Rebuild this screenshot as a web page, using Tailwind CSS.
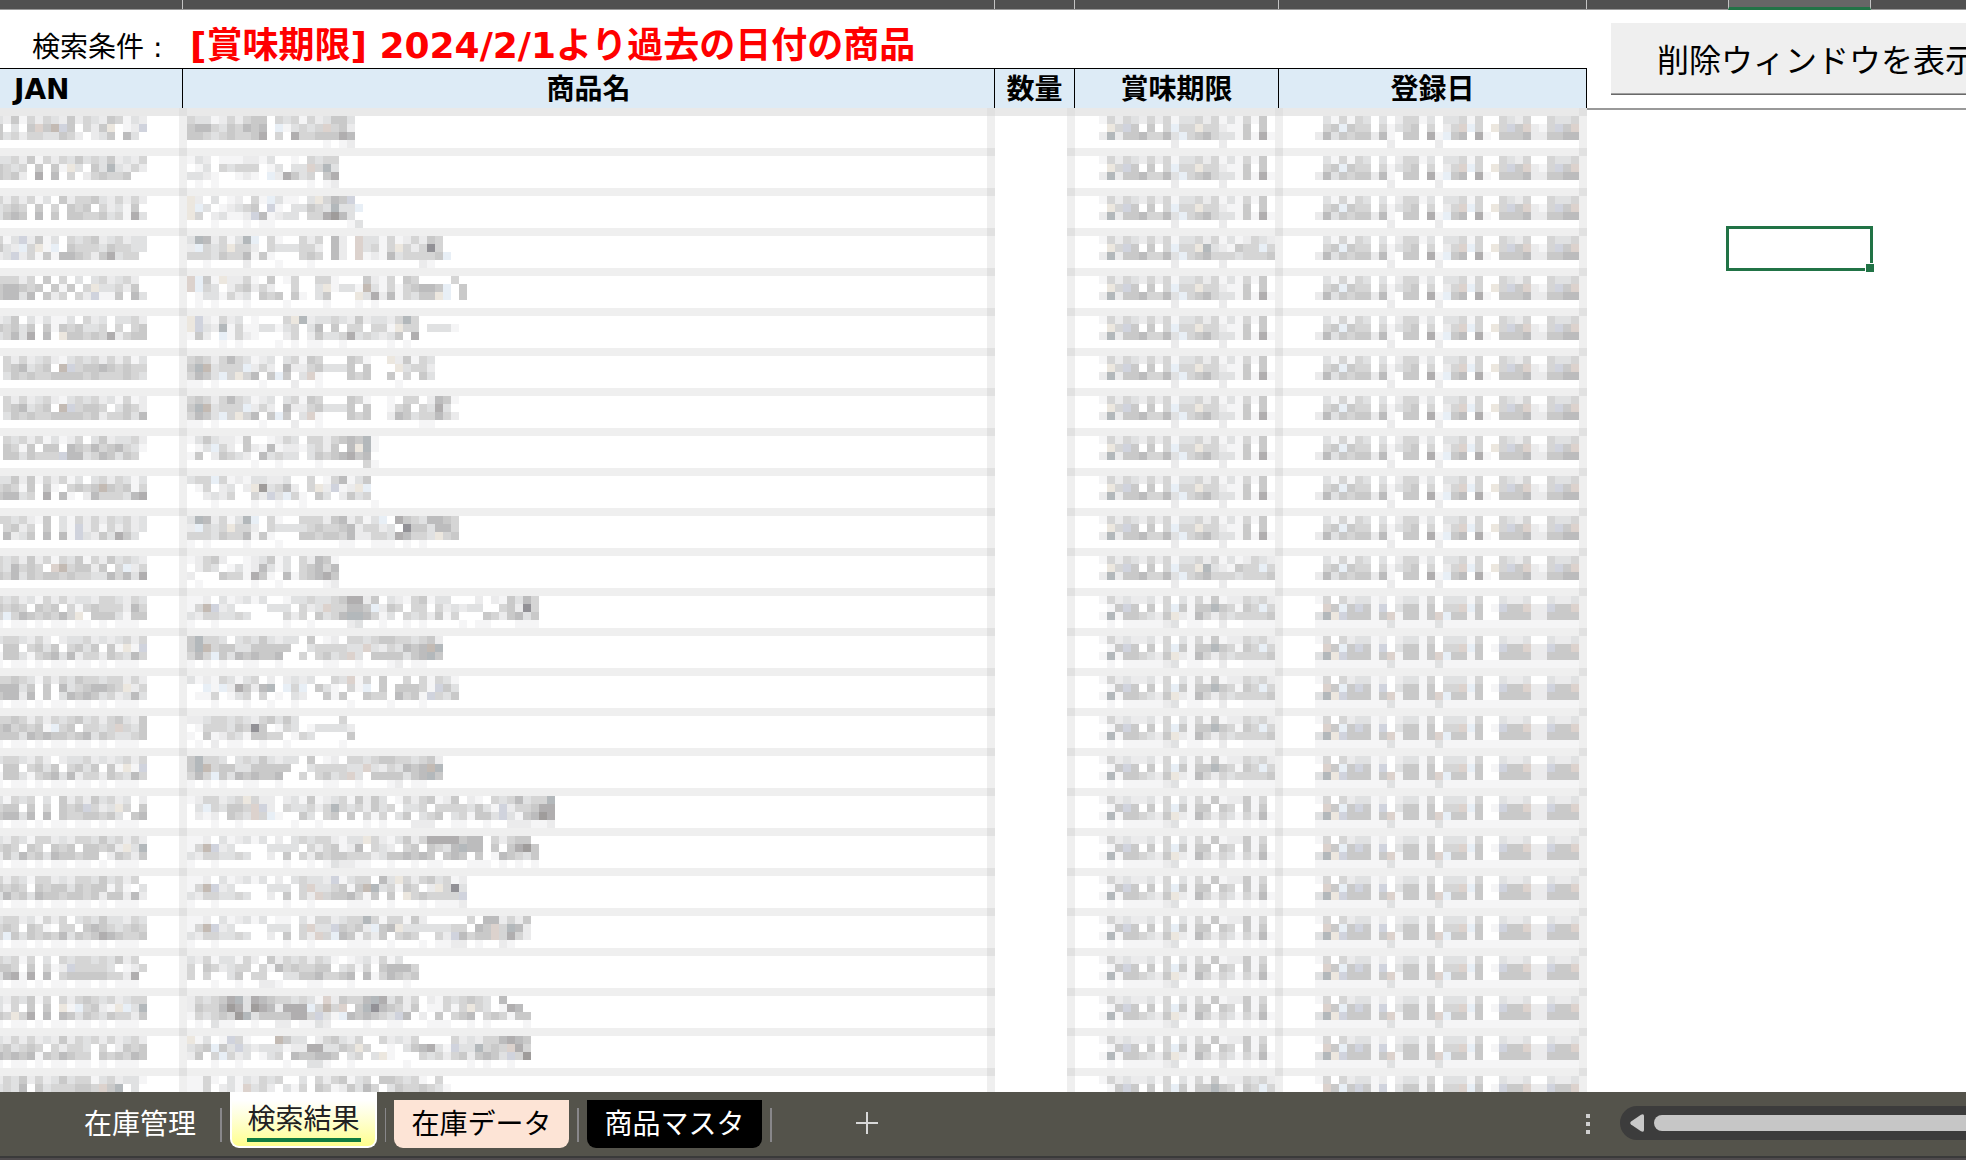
<!DOCTYPE html>
<html lang="ja">
<head>
<meta charset="utf-8">
<title>在庫管理 - 検索結果</title>
<script src="https://cdn.jsdelivr.net/npm/@tailwindcss/browser@4"></script>
</head>
<body class="flex h-screen flex-col overflow-hidden bg-white font-['DejaVu_Sans','Noto_Sans_CJK_JP',sans-serif] text-black">

<!-- column header strip -->
<div class="flex h-[10px] shrink-0 border-b border-[#999] bg-[#505050]">
  <div class="w-[183px] shrink-0 border-r border-[#c4c4c4]"></div>
  <div class="w-[812px] shrink-0 border-r border-[#c4c4c4]"></div>
  <div class="w-[80px] shrink-0 border-r border-[#c4c4c4]"></div>
  <div class="w-[204px] shrink-0 border-r border-[#c4c4c4]"></div>
  <div class="w-[308px] shrink-0 border-r border-[#c4c4c4]"></div>
  <div class="w-[141px] shrink-0"></div>
  <div class="h-[10px] w-[143px] shrink-0 border-x border-b-3 border-x-[#c4c4c4] border-b-[#217346] bg-[#666]"></div>
  <div class="flex-1"></div>
</div>

<main class="flex min-h-0 flex-1 overflow-hidden">
  <section class="w-[1587px] shrink-0">
    <div class="flex h-[58px] items-end pb-1">
      <p class="w-[190px] shrink-0 pl-8 text-[28px] leading-8 whitespace-nowrap">検索条件 :</p>
      <h1 class="text-[36px] leading-9 font-bold whitespace-nowrap text-[#ff0000]">[賞味期限] 2024/2/1より過去の日付の商品</h1>
    </div>
    <table class="w-full table-fixed border-separate border-spacing-0">
      <colgroup><col class="w-[183px]"><col class="w-[812px]"><col class="w-[80px]"><col class="w-[204px]"><col class="w-[308px]"></colgroup>
      <thead>
        <tr class="h-10 bg-[#ddebf6] text-[28px] leading-9 font-bold">
          <th class="border-t border-r border-black p-0 pt-[2px] pl-[14px] text-left">JAN</th>
          <th class="border-t border-r border-black p-0 pt-[2px]">商品名</th>
          <th class="border-t border-r border-black p-0 pt-[2px]">数量</th>
          <th class="border-t border-r border-black p-0 pt-[2px]">賞味期限</th>
          <th class="border-t border-r border-black p-0 pt-[2px]">登録日</th>
        </tr>
      </thead>
      <tbody id="rows"></tbody>
    </table>
  </section>

  <section class="relative min-w-0 flex-1 overflow-hidden">
    <div class="flex h-[100px] overflow-hidden border-b-2 border-[#999] pt-[13px] pl-6">
      <button type="button" class="h-[72px] shrink-0 border-b border-[#696969] bg-[#efefef] px-[46px] pt-1 text-[32px] whitespace-nowrap shadow-[inset_0_-1px_0_#a0a0a0]">削除ウィンドウを表示</button>
    </div>
    <!-- selected cell -->
    <div class="absolute top-[216px] left-[139px] h-[45px] w-[147px] border-3 border-[#217346]">
      <span class="absolute -right-1 -bottom-1 size-[9px] border-t border-l border-white bg-[#217346]"></span>
    </div>
  </section>
</main>

<footer class="flex h-[68px] shrink-0 flex-col bg-[#54534b]">
  <div class="flex h-16 items-start">
    <nav class="flex h-14 shrink-0 items-end text-[28px] leading-8">
      <a href="#stock" class="mr-6 ml-[84px] flex h-12 items-center pt-[2px] text-white">在庫管理</a>
      <span class="mr-2 mb-[6px] h-[34px] w-[2px] bg-[#88878a]"></span>
      <a href="#result" class="flex h-14 w-[147px] flex-col items-center justify-end rounded-b-[9px] border-2 border-t-0 border-white bg-linear-to-b from-white from-15% to-[#ffff8c] pb-1 text-[#222]">
        <span class="h-[34px]">検索結果</span>
        <span class="h-1 w-[114px] bg-[#107c41]"></span>
      </a>
      <span class="mr-2 mb-[6px] ml-2 h-[34px] w-px bg-[#88878a]"></span>
      <a href="#data" class="flex h-12 w-[175px] items-center justify-center rounded-b-[9px] bg-[#fde4d6] pt-[2px]">在庫データ</a>
      <span class="mr-2 mb-[6px] ml-2 h-[34px] w-[2px] bg-[#88878a]"></span>
      <a href="#master" class="flex h-12 w-[175px] items-center justify-center rounded-b-[9px] bg-black pt-[2px] text-white">商品マスタ</a>
      <span class="mb-[6px] ml-2 h-[34px] w-[2px] bg-[#88878a]"></span>
      <button type="button" aria-label="シートを追加" class="mb-[14px] ml-[84px]">
        <svg width="22" height="22" viewBox="0 0 22 22" stroke="#d8d8d8" stroke-width="2" shape-rendering="crispEdges"><path d="M11 0V22M0 11H22"/></svg>
      </button>
    </nav>
    <div class="flex-1"></div>
    <svg class="mt-[22px] mr-[30px] shrink-0" width="4" height="21" fill="#d0d0d0" shape-rendering="crispEdges"><path d="M0 0h4v4H0zM0 8h4v4H0zM0 16h4v4H0z"/></svg>
    <div class="mt-[14px] flex h-[34px] w-[346px] shrink-0 items-center rounded-l-[17px] bg-[#3c3c3c] pl-[10px]">
      <svg class="mr-[10px] shrink-0" width="14" height="18" viewBox="0 0 14 18"><path d="M1 7.5 11 .8Q14 -.5 14 2V16Q14 18.500 11 17.200L1 10.500Q-.5 9 1 7.500Z" fill="#c8c8c8"/></svg>
      <div class="h-4 flex-1 rounded-l-lg bg-[#c6c6c6]"></div>
    </div>
  </div>
  <div class="h-1 border-t-2 border-[#3a3a3a] bg-[#4f4b4d]"></div>
</footer>

<script>
// Shade codes for the 8px mosaic that hides each value.
const shade = {1:'#f5f5f6',2:'#ebebec',3:'#e0e1e2',4:'#d5d5d5',5:'#c9c9c9',6:'#bcbcbd',7:'#b0aeaf',8:'#9f9c9b',9:'#929196',
  b:'#d0d3dd',c:'#e8eff6',g:'#b3b8bb',p:'#dcd2cd',y:'#ece7df',t:'#c3bab3'};

// Per record: three lines for JAN, then the lines for the product name.
const data = [
 ['3251424325243254132','50305p5tb50425y012b','5342443354202350630', '433124245504341423553','56643546560c13434p452','5543454457040744555760','000000000000000001012'],
 ['3342514243534352324','543405051y3053g3242','5452070604024544500', '1320111221300104344','013043444013033p4g3','3321001210c27534057','0101000000000001012'],
 ['4242413052445324242','3454050405450423150','3565060505544534173', 'y203012041c31103y465b','yc30123450b1033543g33c','y4023112b612330447863','0001000101100000000013'],
 ['413b251304345234233','532c4y1c05444354433','23b24151665425734405', '3g62413gc04100424062'+'0p3314124254','2c434y442043334420620p3414y42494','444354461510004540620p1216344445c','0010000200010001000000000000021'],
 ['444240504030342342','566545051504y334250','566360524042b115063', 'pc51y22410501400441000521405400004','pc430245242004003y1331t314145665c05','01331423054505103500'+'0y372614355yc05','010100010000100001000101'],
 ['2350313113042303342','5453505154533404045','34637060y5545472455', 'yb21423010004yg233432523324g4','yb32g141133134036050440441y4403331','1520c142100024025334734323507','0000101000010101100100000101'],
 ['0424234213434242413','04563450tb455654544','0354544555545444543', '4542464312303415400054100y25143','5gt3444c242062245333505000y3442','4653c4y4605c503p100054500504053','110100000100020010000000001'],
 ['0424234213434231412','04563450tb455403542','0354544555545244536', '4542464312303415400054100104402651','5gt3444c2420622453335050014504373','4653c4y4605c503p100054500265344642','1101000001000200100000000000011'],
 ['0434241312403523342','0541505506546456431','05535444b6634653540', '1353221500124304424565g1','013c42052161221342506yg1','150254320634330354567560','000000001001000010000041'],
 ['3352514241303424313','4541505104545t54514','5663407061026444367', '344c4121332230040146135','01402302y8346204y2b12yc','0023240042b3c4105302534','000100001001001000000001'],
 ['4434215031424243423','0452405031b24142423','0623506061b3253753', '3g62413gc041004442562413c075436654','2c434y4420433334544562442309553664','4443544615100055455462244376443y45','101000010001000000011001110101'],
 ['4342524143514253432','4364540pt4552504c24','5463545545443364637', '1245200123513042651','0243013126313045646','2000544175106145675','0100000010010000012'],
 ['4342314242332443243','5454054504145444264','4c46545464y05553155', '11203123130013343345772503214513300020215364','14tb2300003330423p44665c25404404232330045294','32443343000042405346gg6413043425140005425635','10010000000010010000230010010100001011000111'],
 ['3443242023342323424','0550453504535051y1b','1553145636244254364', '5g443034353233050120443455443452','5gt4553355555003444433p3243656tg','464c5365655600404534p305555356g5','101010011001000001100100012011'],
 ['4454314243544344242','6663505063456654y24','5662605036565342363', '31214313402023230043p1405004041431','00c1c27526g0c4c0531041c05055541b53','011401340401032005150054406451b435','000100010010010000001000010001'],
 ['4454242434534245325','5645451c4504434p435','5553656554563543345', '223443432453530000040','014443549501430133332','105124315544014300005','01020110010010000001'],
 ['3443242023342323424','0550453504535051y1b','1553145636244254364', '5g443034353233050120443455443452','5gt4553355555003444433p3243656tg','464c5365655600404534p305555356g5','101010011001000001100100012011'],
 ['3143403052425342302','45505040545b423y405','5663606054455453056', '1244234y4220231512341525301424512502104346344g','03c43554pb20433424g43425340334044443531b244577','02120543p4c1005304505041403503450341553b315687','0001001000000100100000101000222001100100222112'],
 ['3243144232443534242','4540540545055452y3g','2536453655455025425', '1120312313020343442133y42135247777566042455','14tb230000333304245126043204505436g660505785','32443343002050425455444235565650565050165435','10010000000010010132211001001011000111010101'],
 ['4243144232443534240','5454054553545514103','3645365545545255262', '112031231302034332b1344063y42453412','14tb23000033304p334515tg3415402y493','3244334300205042p4556415050y454444b','10010000000010010000111001000101112'],
 ['3442314240343533243','4540541044056543454','4c53545463545765445', '1120312313011031442344g41441520000040662425','14tb23000033304p33b5452c56y33333344065p4g62','3244334300205042p4c65142504540042b6455p4742','1001000000001001000011100100010112201002100'],
 ['4341403043443435240','554050412b444430124','3671706045555544270', '32413314205243424310123141300','40542344041645445503414056664','40400350440033556445606146545','00010010022100011000100000010'],
 ['3243514042454342344','31405050y1c4521yc3g','54y4706065354354425', '243457g3765443431p25446g73524021434543060','254468738762777c4t4p05g965425011414y4301760','1434548g35555774b31c656543b6020504560454155','0103110010022011320000100110001110010100001'],
 ['3242423252434242342','4534540424430402545','6565615465440545465', 'y1301b41000t5330245324004232400004232446765','345c53b32333122773354y40010356731b33g454p74','2504c4230134065566503403y100043424525653b48','00010010000010033100100000010000000101001'],
 ['2435242353441342331','3436053444554p5g030','', '1141031324340030424513405543410400','1140231p34203140541253640354454310','',''],
];

const expUpper = ['1424324241334241314150','0y4b50504c44y442115050','2g25564463c45643315171','0000000002000002'];
const expUpperLong = ['1424324241334241312432','0y4b50504c44yg321544c4','2g25564463c45644434445','0000000002000002'];
const expLower = ['1423223140314151225140','015b50504c515505405150','1g1554325y216424314261','0101111123011002001010'];
const expLowerLong = ['1423223140314151224342','015b50504c5155g54154c4','1g1554325y216424344445','0101111123011002001111'];
const regUpper = ['031414303024413033414004324004334','045c54404134504024pc40y4b5p214b5p','2635455261055071c5607105556225566','000000000200000200'];
const regLower = ['140423312023314033314003223003223','0p5c5b51b035515044pc501b55p22b55p','3gyb55515p15515pc5515005555225555','111111111311111311111111111111111'];

function cell(w, parts) {
  return `<svg class="block" width="${w}" height="40" shape-rendering="crispEdges" aria-hidden="true">${parts}</svg>`;
}
const box = (x, y, w, h, c) => `<rect x="${x}" y="${y}" width="${w}" height="${h}" fill="${c}"/>`;
function mosaic(lines, x0) {
  return lines.map((line, r) => [...line].map((ch, i) =>
    shade[ch] ? box(x0 + i * 8, 8 + r * 8, 8, 8, shade[ch]) : '').join('')).join('');
}
const band = (w, k) => box(0, 0, w, 8, k ? '#efefef' : '#e9e9e9');
const edge = (x, w) => box(x, 0, w, 40, '#efefef') + box(x, 0, w, 8, '#e1e1e1');

document.getElementById('rows').innerHTML = data.map((d, k) => {
  const lower = k >= 12;
  const jan = d.slice(0, 3).map(s => s.slice(0, 19));
  if (lower) jan.push('1011010110110101110');
  const long = k === 3 || (k >= 11 && k <= 16) || k === 24;
  const exp = lower ? (long ? expLowerLong : expLower) : (long ? expUpperLong : expUpper);
  const reg = lower ? regLower : regUpper;
  return `<tr>
    <td class="p-0">${cell(183, band(183, k) + mosaic(jan, -5) + edge(179, 4))}</td>
    <td class="p-0">${cell(812, band(812, k) + mosaic(d.slice(3), 4) + edge(0, 4) + edge(804, 8))}</td>
    <td class="p-0">${cell(80, (k ? '' : band(80, k)) + edge(72, 8))}</td>
    <td class="p-0">${cell(204, band(204, k) + mosaic(exp, 24) + edge(200, 4))}</td>
    <td class="p-0">${cell(308, band(308, k) + mosaic(reg, 36) + edge(0, 4) + edge(300, 8))}</td>
  </tr>`;
}).join('');
</script>
</body>
</html>
